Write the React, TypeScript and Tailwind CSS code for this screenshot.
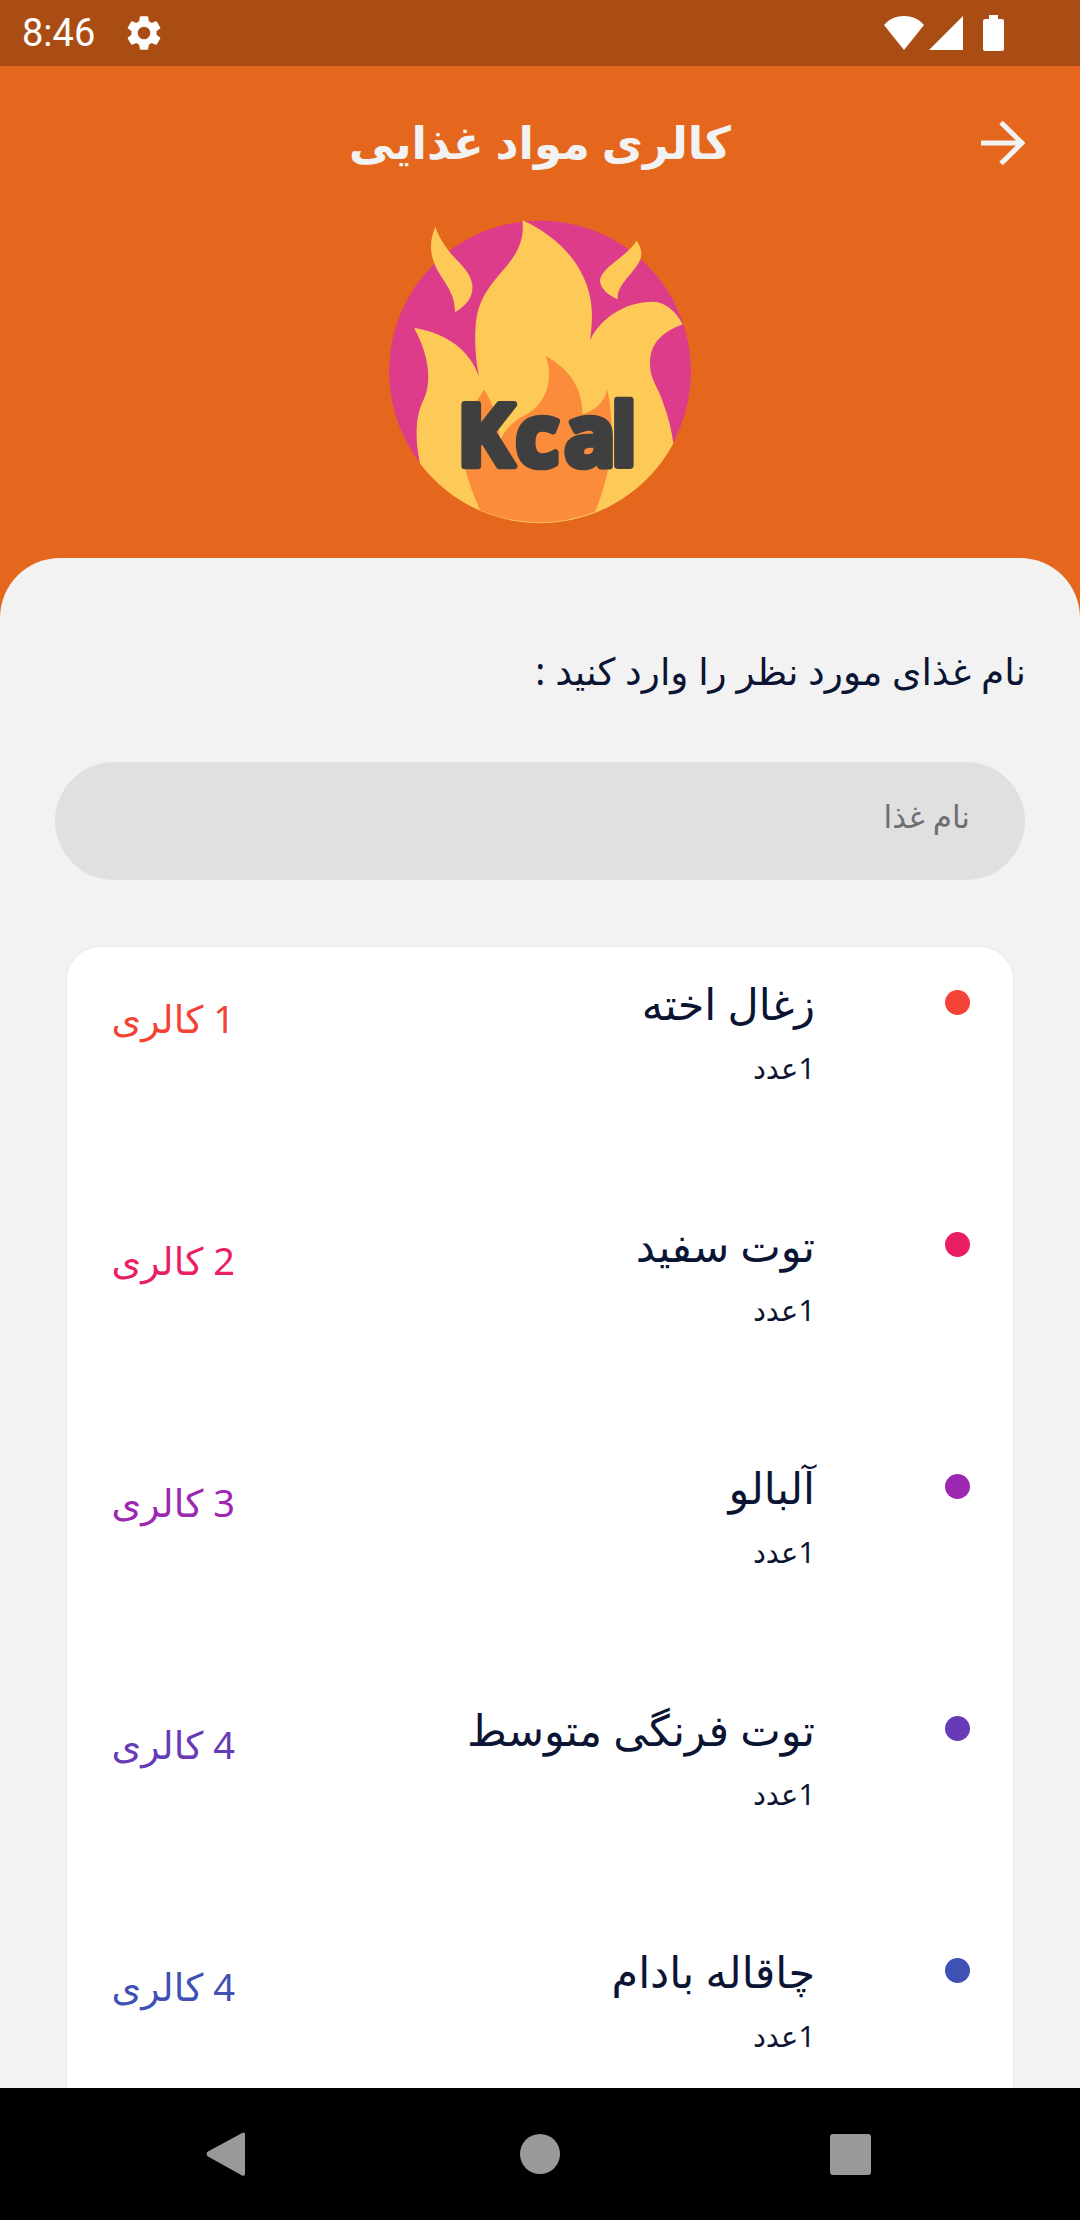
const FA = 'font-["Noto_Sans","DejaVu_Sans",sans-serif]'

const FOODS = [
  { name: 'زغال اخته', cal: '1 کالری', color: 'bg-[#F44336]', text: 'text-[#F44336]' },
  { name: 'توت سفید', cal: '2 کالری', color: 'bg-[#E91E63]', text: 'text-[#E91E63]' },
  { name: 'آلبالو', cal: '3 کالری', color: 'bg-[#9C27B0]', text: 'text-[#9C27B0]' },
  { name: 'توت فرنگی متوسط', cal: '4 کالری', color: 'bg-[#673AB7]', text: 'text-[#673AB7]' },
  { name: 'چاقاله بادام', cal: '4 کالری', color: 'bg-[#3F51B5]', text: 'text-[#3F51B5]' },
]

function StatusBar() {
  return (
    <div className="h-[66px] shrink-0 bg-[#AA4D14] flex items-center pl-[22px] pr-[76px] text-white">
      <span className='font-["Roboto",sans-serif] text-[38px] leading-none'>8:46</span>
      <svg className="ml-[28px]" width="42" height="42" viewBox="0 0 24 24" fill="currentColor">
        <path d="M19.14 12.94c.04-.3.06-.61.06-.94 0-.32-.02-.64-.07-.94l2.03-1.58a.49.49 0 0 0 .12-.61l-1.92-3.32a.49.49 0 0 0-.59-.22l-2.39.96c-.5-.38-1.03-.7-1.62-.94l-.36-2.54a.48.48 0 0 0-.48-.41h-3.84a.47.47 0 0 0-.47.41l-.36 2.54c-.59.24-1.13.57-1.62.94l-2.39-.96a.48.48 0 0 0-.59.22L2.74 8.87a.47.47 0 0 0 .12.61l2.03 1.58c-.05.3-.09.63-.09.94s.02.64.07.94l-2.03 1.58a.49.49 0 0 0-.12.61l1.92 3.32c.12.22.37.29.59.22l2.39-.96c.5.38 1.03.7 1.62.94l.36 2.54c.05.24.24.41.48.41h3.84c.24 0 .44-.17.47-.41l.36-2.54c.59-.24 1.13-.56 1.62-.94l2.39.96c.22.08.47 0 .59-.22l1.92-3.32a.47.47 0 0 0-.12-.61l-2.01-1.58zM12 15.6A3.6 3.6 0 1 1 12 8.4a3.6 3.6 0 0 1 0 7.2z" />
      </svg>
      <div className="ml-auto flex items-center">
        <svg width="40" height="34" viewBox="0 0 40 34" fill="currentColor">
          <path d="M20 34 0 9C5 3 12 0 20 0s15 3 20 9z" />
        </svg>
        <svg className="ml-[5px]" width="34" height="34" viewBox="0 0 34 34" fill="currentColor">
          <path d="M0 34 34 0v34z" />
        </svg>
        <svg className="ml-[20px]" width="21" height="36" viewBox="0 0 21 36" fill="currentColor">
          <path d="M6 0h9v4h4a2 2 0 0 1 2 2v28a2 2 0 0 1-2 2H2a2 2 0 0 1-2-2V6a2 2 0 0 1 2-2h4z" />
        </svg>
      </div>
    </div>
  )
}

// Flame badge, coordinates taken at 3x of the reference crop
function KcalLogo() {
  return (
    <svg width="302" height="303" viewBox="87 60 906 908" className="block overflow-visible">
      <circle cx="540" cy="514" r="453" fill="#DD3C8B" />
      <path fill="#FDCA57" d="M226 80C205 130 210 170 235 215C255 250 285 280 285 336C320 315 340 290 337 255C332 210 285 180 265 150C245 125 235 105 226 80Z" />
      <path fill="#FDCA57" d="M830 122C800 170 725 200 720 240C720 265 745 285 773 297C770 250 825 220 842 175C848 150 838 135 830 122Z" />
      <path fill="#FDCA57" d="M162 383C260 400 330 450 357 530C345 470 342 400 350 350C360 290 400 245 425 215C470 165 495 120 487 60C590 105 670 190 690 290C700 340 695 380 690 420C730 340 810 305 880 305C915 307 945 330 968 372C910 395 870 425 870 490C870 540 895 560 910 610C925 650 935 690 940 730A453 453 0 0 1 180 790C165 720 165 650 190 600C215 550 210 470 162 383Z" />
      <path fill="#FA8C3C" d="M705 935C750 830 770 700 742 568C730 610 705 630 668 642C665 560 630 510 557 467C580 530 565 600 505 640C470 655 440 680 420 720C415 660 400 610 372 568C340 620 300 680 305 740C310 810 335 870 360 930A453 453 0 0 0 705 935Z" />
      <text x="291 466 612 752" y="798" fill="#3F3F3F" stroke="#3F3F3F" strokeWidth="20" strokeLinejoin="round" fontFamily="Open Sans, sans-serif" fontWeight="700" fontSize="258">Kcal</text>
    </svg>
  )
}

function FoodRow({ food }: { food: (typeof FOODS)[number] }) {
  return (
    <div className="h-[242px] shrink-0 flex items-start pl-[46px] pr-[43px]">
      <div dir="rtl" className={`w-[122px] mt-[47px] text-[38px] leading-[48px] whitespace-nowrap text-right ${food.text}`}>{food.cal}</div>
      <div dir="rtl" className="flex-1 text-[#0B1533] mr-[130px] pt-[27px]">
        <div className="text-[43px] leading-[60px] whitespace-nowrap">{food.name}</div>
        <div className="text-[29px] leading-[40px] mt-[14px]">1عدد</div>
      </div>
      <span className={`w-[25px] h-[25px] mt-[43px] rounded-full shrink-0 ${food.color}`} />
    </div>
  )
}

export default function App() {
  return (
    <div className={`w-[1080px] h-[2220px] flex flex-col overflow-hidden ${FA}`}>
      <StatusBar />
      <div className="flex-1 min-h-0 flex flex-col bg-[#E5671D]">
        <div className="h-[492px] shrink-0 flex flex-col items-center">
          <div className="relative w-full h-[154px] flex items-center justify-center">
            <h1 className="text-[#F2F2F2] text-[45px] font-bold leading-none -mt-[4px]">کالری مواد غذایی</h1>
            <svg className="absolute right-[55px] top-[55px]" width="44" height="44" viewBox="0 0 44 44" fill="none" stroke="#F2F2F2" strokeWidth="5">
              <path d="M0 22h41M20 1.5 41 22 20 42.5" />
            </svg>
          </div>
          <KcalLogo />
        </div>
        <div className="flex-1 min-h-0 bg-[#F2F2F2] rounded-t-[60px] px-[55px] flex flex-col">
          <p dir="rtl" className="text-[#0B1533] text-[37.5px] leading-[50px] mt-[88px] -mr-[1px]">نام غذای مورد نظر را وارد کنید :</p>
          <div dir="rtl" className="h-[118px] mt-[66px] shrink-0 bg-[#E0E0E0] rounded-[59px] pr-[55px] pt-[32px] text-[31px] leading-[44px] text-[#6E6E73]">نام غذا</div>
          <div className="flex-1 min-h-0 mt-[66px] mx-[11px] bg-white border border-[#E8E8E8] border-b-0 rounded-t-[34px] overflow-hidden flex flex-col">
            {FOODS.map(f => <FoodRow key={f.name} food={f} />)}
          </div>
        </div>
      </div>
      <div className="h-[132px] shrink-0 bg-black flex items-center relative">
        <svg className="ml-[206px]" width="40" height="46" viewBox="0 0 40 46" fill="#999999">
          <path d="M37 1.5a2 2 0 0 1 2 1.3V43a2 2 0 0 1-3 1.5L2 25.5a3 3 0 0 1 0-5z" />
        </svg>
        <span className="ml-[274px] w-[40px] h-[40px] rounded-full bg-[#999999]" />
        <span className="ml-[270px] w-[41px] h-[41px] rounded-[3px] bg-[#999999]" />
      </div>
    </div>
  )
}
